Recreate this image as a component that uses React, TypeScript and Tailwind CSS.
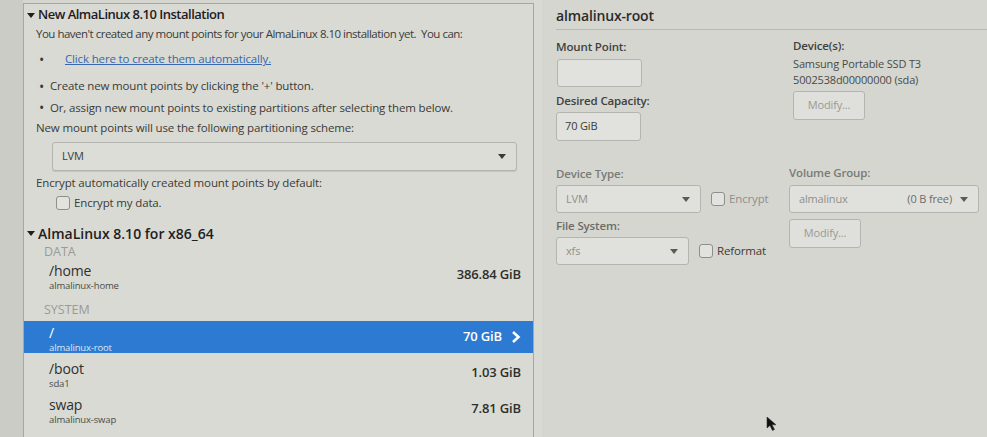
import React from "react";

const Arrow = ({ className = "" }: { className?: string }) => (
  <svg width="8" height="5" viewBox="0 0 8 5" className={className}>
    <path d="M0 0 L8 0 L4 5 Z" fill="currentColor" />
  </svg>
);

const Check = ({ label, dim }: { label: string; dim?: boolean }) => (
  <div className="flex items-center gap-[4px]">
    <div className="w-[14px] h-[14px] rounded-[3px] border border-[#8e8f8a] bg-[#e2e3de]" />
    <span className={dim ? "text-[#8f908b]" : "text-[#3a3b38]"}>{label}</span>
  </div>
);

const Combo = ({ w, value, extra, dim }: { w: string; value: string; extra?: string; dim?: boolean }) => (
  <div className={`${w} h-[28px] rounded-[3px] border border-[#b4b5b0] bg-[#e0e1dc] flex items-center pl-[9px] pr-[10px] text-[11px] ${dim ? "text-[#8f908b]" : "text-[#4a4b47]"}`}>
    <span className="flex-1">{value}</span>
    {extra && <span className="mr-[8px] text-[#6c6d69]">{extra}</span>}
    <Arrow className="text-[#5a5b57]" />
  </div>
);

const Part = ({ name, sub, size, selected }: { name: string; sub: string; size: string; selected?: boolean }) => (
  <div className={`h-[32px] mb-[4px] flex items-center pl-[25px] pr-[12px] ${selected ? "bg-[#2c7ad1] text-white" : "text-[#2e2f2c]"}`}>
    <div className="flex-1 flex flex-col">
      <span className="text-[14px] leading-[18px] mt-[3px]">{name}</span>
      <span className={`text-[9.5px] leading-[12px] ${selected ? "text-[#dde8f6]" : "text-[#4a4b47]"}`}>{sub}</span>
    </div>
    <span className="text-[13px] font-semibold">{size}</span>
    {selected && (
      <svg width="10" height="12" viewBox="0 0 10 12" className="ml-[9px]">
        <path d="M2 1 L7.5 6 L2 11" fill="none" stroke="white" strokeWidth="2.6" />
      </svg>
    )}
  </div>
);

const Button = ({ w }: { w: string }) => (
  <div className={`${w} h-[29px] rounded-[3px] border border-[#b4b5b0] bg-[#dfe0db] flex items-center justify-center text-[11px] text-[#999a95]`}>
    Modify...
  </div>
);

export default function App() {
  return (
    <div className="relative w-[987px] h-[437px] overflow-hidden flex bg-[#d5d6d0] font-['Open_Sans',sans-serif] text-[#2f302d] tracking-[-0.15px]">
      <div className="w-[23px] shrink-0 bg-[#cbccc6]" />

      {/* left panel */}
      <div className="w-[511px] shrink-0 mt-[3px] border border-b-0 border-[#a6a7a2] bg-[#d9dad4] flex flex-col">
        <div className="h-[20px] mt-[1px] flex items-center pl-[3px] text-[13px] font-semibold text-[#1f201e] tracking-[-0.5px]">
          <Arrow className="mr-[3px] text-[#1f201e]" />
          New AlmaLinux 8.10 Installation
        </div>
        <div className="pl-[12px] text-[11.5px] text-[#3a3b38]">
          <div className="h-[18px] flex items-center tracking-[-0.5px]">You haven't created any mount points for your AlmaLinux 8.10 installation yet.&nbsp; You can:</div>
          <div className="h-[32px] flex items-center">
            <span className="ml-[3px] w-[26px] text-[14px]">•</span>
            <span className="text-[#3767ad] underline">Click here to create them automatically.</span>
          </div>
          <div className="h-[22px] flex items-center">
            <span className="ml-[3px] w-[11px] text-[14px]">•</span>Create new mount points by clicking the '+' button.
          </div>
          <div className="h-[21px] flex items-center">
            <span className="ml-[3px] w-[11px] text-[14px]">•</span>Or, assign new mount points to existing partitions after selecting them below.
          </div>
          <div className="h-[20px] flex items-center">New mount points will use the following partitioning scheme:</div>
          <div className="mt-[4px] ml-[16px] w-[465px] h-[29px] rounded-[3px] border border-[#b3b4af] bg-[#dcddd7] shadow-[0_1px_0_#c4c5bf] flex items-center pl-[9px] pr-[10px] text-[11px]">
            <span className="flex-1">LVM</span>
            <Arrow className="text-[#3a3b38]" />
          </div>
          <div className="h-[24px] flex items-center">Encrypt automatically created mount points by default:</div>
          <div className="h-[16px] ml-[20px] flex items-center">
            <Check label="Encrypt my data." />
          </div>
        </div>
        <div className="h-[24px] mt-[10px] flex items-center pl-[3px] text-[14px] font-semibold text-[#1f201e] tracking-[0px]">
          <Arrow className="mr-[3px] text-[#1f201e]" />
          AlmaLinux 8.10 for x86_64
        </div>
        <div className="h-[14px] pl-[20px] flex items-center text-[12.5px] text-[#9a9b96] tracking-[0px]">DATA</div>
        <Part name="/home" sub="almalinux-home" size="386.84 GiB" />
        <div className="h-[26px] pl-[20px] flex items-end pb-[1px] text-[12.5px] text-[#9a9b96] tracking-[0px]">SYSTEM</div>
        <Part name="/" sub="almalinux-root" size="70 GiB" selected />
        <Part name="/boot" sub="sda1" size="1.03 GiB" />
        <Part name="swap" sub="almalinux-swap" size="7.81 GiB" />
      </div>

      <div className="w-[8px] shrink-0 bg-[#d9dad4]" />

      {/* right panel */}
      <div className="flex-1 pl-[14px] flex flex-col">
        <div className="h-[26px] mt-[2px] flex items-center text-[14px] font-semibold text-[#2a2b28]">almalinux-root</div>
        <div className="h-[1px] bg-[#b9bab4] mt-[1px]" />

        <div className="flex text-[11.5px]">
          <div className="w-[237px] flex flex-col">
            <div className="h-[16px] mt-[9px] flex items-center font-semibold text-[#40413e]">Mount Point:</div>
            <div className="mt-[4px] ml-[1px] w-[85px] h-[28px] rounded-[3px] border border-[#b4b5b0] bg-[#e1e2dd]" />
            <div className="h-[16px] mt-[6px] flex items-center font-semibold text-[#40413e]">Desired Capacity:</div>
            <div className="mt-[3px] w-[85px] h-[29px] rounded-[3px] border border-[#b4b5b0] bg-[#e1e2dd] flex items-center pl-[8px] text-[11px] text-[#3a3b38]">70 GiB</div>
          </div>
          <div className="flex flex-col">
            <div className="h-[16px] mt-[8px] flex items-center font-semibold text-[#40413e]">Device(s):</div>
            <div className="h-[16px] mt-[2px] flex items-center text-[11px] text-[#4a4b47]">Samsung Portable SSD T3</div>
            <div className="h-[16px] flex items-center text-[11px] text-[#4a4b47]">5002538d00000000 (sda)</div>
            <div className="mt-[3px]"><Button w="w-[72px]" /></div>
          </div>
        </div>

        <div className="flex text-[11.5px]">
          <div className="w-[233px] flex flex-col">
            <div className="h-[16px] mt-[25px] flex items-center font-semibold text-[#7a7b76]">Device Type:</div>
            <div className="mt-[3px] flex items-center gap-[10px]">
              <Combo w="w-[145px]" value="LVM" dim />
              <Check label="Encrypt" dim />
            </div>
            <div className="h-[16px] mt-[5px] flex items-center font-semibold text-[#6b6c68]">File System:</div>
            <div className="mt-[3px] flex items-center gap-[10px]">
              <Combo w="w-[133px]" value="xfs" dim />
              <Check label="Reformat" />
            </div>
          </div>
          <div className="flex flex-col">
            <div className="h-[16px] mt-[24px] flex items-center font-semibold text-[#7a7b76]">Volume Group:</div>
            <div className="mt-[4px]">
              <Combo w="w-[190px]" value="almalinux" extra="(0 B free)" dim />
            </div>
            <div className="mt-[6px]"><Button w="w-[72px]" /></div>
          </div>
        </div>
      </div>

      {/* mouse pointer */}
      <svg width="12" height="16" viewBox="0 0 12 16" className="absolute left-[766px] top-[416px]">
        <path d="M1 1 L1 12 L4 9.5 L6.5 14.5 L8.5 13.5 L6 8.8 L10 8.8 Z" fill="#111" stroke="#333" strokeWidth="0.6" />
      </svg>
    </div>
  );
}
